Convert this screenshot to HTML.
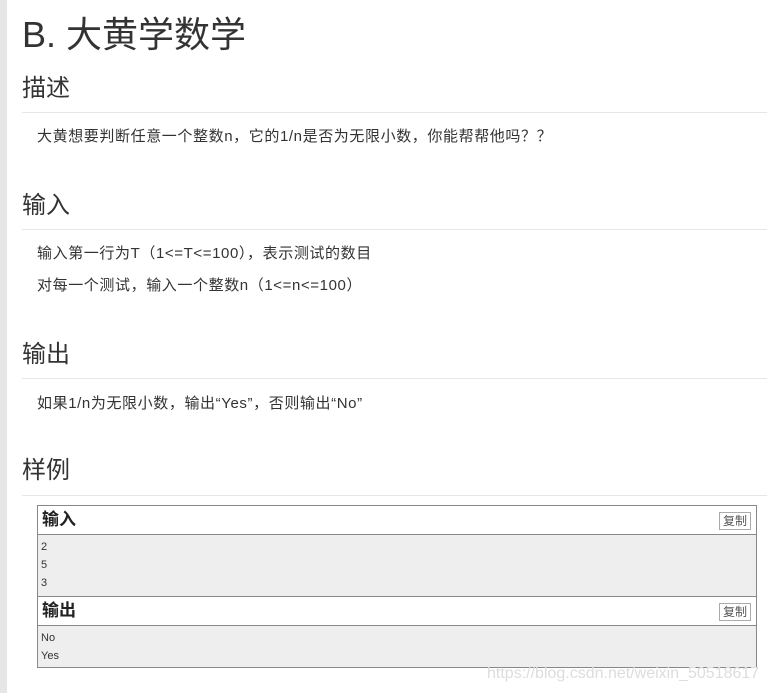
<!DOCTYPE html>
<html><head><meta charset="utf-8"><style>
body{margin:0;width:767px;height:693px;background:#fff;position:relative;overflow:hidden;font-family:"Liberation Sans","Noto Sans CJK SC",sans-serif;color:#333}
.bar{position:absolute;left:0;top:0;width:7px;height:693px;background:#e6e6e6}
.a{position:absolute;white-space:nowrap}
h1{position:absolute;left:22px;top:12px;margin:0;font-size:36px;font-weight:normal;line-height:46px}
.h{position:absolute;left:22px;margin:0;font-size:24px;font-weight:normal;line-height:30px}
.hr{position:absolute;left:22px;right:0;height:1px;background:#e6e6e6}
.p{position:absolute;left:37px;font-size:15px;line-height:20px;letter-spacing:0.6px;white-space:nowrap}
.box{position:absolute;left:37px;width:718px;border:1px solid #888;}
.hd{height:28px;border-bottom:1px solid #888;background:#fff;position:relative}
.hd b{position:absolute;left:4px;top:3px;font-size:17px;line-height:22px;color:#222}
.cp{position:absolute;right:5px;top:6px;border:1px solid #aaa;font-size:12px;line-height:16px;padding:0 3px;color:#555}
.dt{background:#eee;font-family:"Liberation Sans","DejaVu Sans",sans-serif;font-size:11px;line-height:18px;padding:3px 3px 2px;color:#333}
</style></head><body>
<div class="bar"></div>
<h1>B. 大黄学数学</h1>
<div class="h" style="top:74px">描述</div><div class="hr" style="top:112px"></div>
<div class="p" style="top:127px">大黄想要判断任意一个整数n，它的1/n是否为无限小数，你能帮帮他吗？？</div>
<div class="h" style="top:191px">输入</div><div class="hr" style="top:229px"></div>
<div class="p" style="top:244px">输入第一行为T（1&lt;=T&lt;=100），表示测试的数目</div>
<div class="p" style="top:276px">对每一个测试，输入一个整数n（1&lt;=n&lt;=100）</div>
<div class="h" style="top:340px">输出</div><div class="hr" style="top:378px"></div>
<div class="p" style="top:394px">如果1/n为无限小数，输出“Yes”，否则输出“No”</div>
<div class="h" style="top:456px">样例</div><div class="hr" style="top:495px"></div>
<div class="box" style="top:505px">
<div class="hd"><b>输入</b><span class="cp">复制</span></div>
<div class="dt" style="height:56px">2<br>5<br>3</div>
<div class="hd" style="border-top:1px solid #888"><b>输出</b><span class="cp">复制</span></div>
<div class="dt" style="height:36px;border-bottom:0">No<br>Yes</div>
</div>
<div class="a" style="left:487px;top:665px;font-size:16px;color:#ddd">https://blog.csdn.net/weixin_50518617</div>
</body></html>
